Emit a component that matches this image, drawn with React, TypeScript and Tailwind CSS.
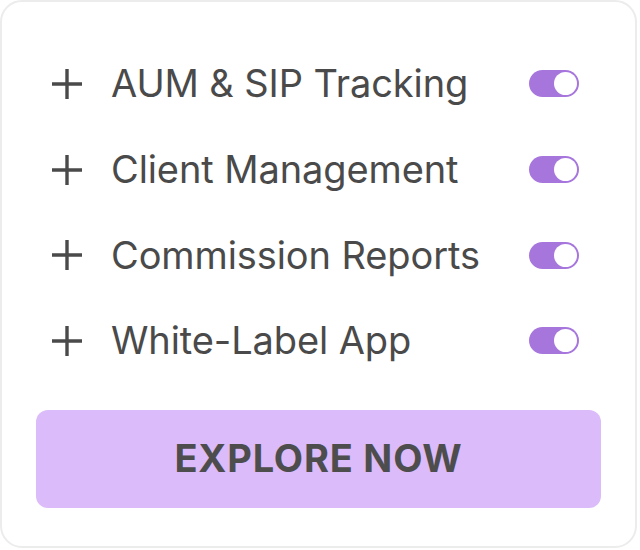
const features = ['AUM & SIP Tracking', 'Client Management', 'Commission Reports', 'White-Label App']

// Pill switch shown in its "on" state
function Toggle() {
  return (
    <span className="flex h-[27px] w-[50px] items-center justify-end rounded-full bg-[#a676dc] p-[2px]">
      <span className="h-[23px] w-[23px] rounded-full bg-white" />
    </span>
  )
}

function PlusIcon() {
  return (
    <svg width="32" height="32" viewBox="0 0 32 32" className="shrink-0 text-[#4a4a4a]">
      <path d="M16 1v30M1 16h30" stroke="currentColor" strokeWidth="3.4" fill="none" />
    </svg>
  )
}

export default function App() {
  return (
    <div className="h-[550px] w-[640px] bg-white" style={{ fontFamily: 'Inter, "Noto Sans", sans-serif' }}>
      <div className="flex h-[548px] w-[637px] flex-col rounded-[22px] border-2 border-[#ececec] bg-white px-[34px] pt-[39px]">
        <ul className="flex flex-col">
          {features.map((f) => (
            <li key={f} className="flex h-[85.7px] items-center">
              <span className="ml-[15px] flex">
                <PlusIcon />
              </span>
              <span className="ml-[28px] flex-1 text-[38px] tracking-[-0.1px] text-[#4a4a4a]">{f}</span>
              <span className="mr-[22px]">
                <Toggle />
              </span>
            </li>
          ))}
        </ul>
        <button className="mt-[26px] flex h-[98px] w-full items-center justify-center rounded-[12px] bg-[#dbbbf9] text-[38px] font-bold tracking-[0.8px] text-[#4d4d4d]">
          EXPLORE NOW
        </button>
      </div>
    </div>
  )
}
